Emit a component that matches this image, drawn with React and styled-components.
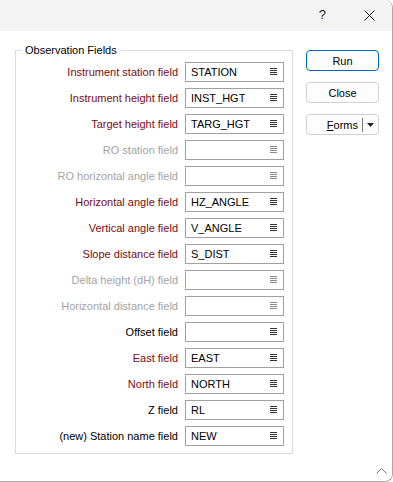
import React from 'react'
import styled, { createGlobalStyle } from 'styled-components'

const GlobalStyle = createGlobalStyle`
	html, body {
		margin: 0;
		padding: 0;
		background: #ffffff;
	}
	body {
		font-family: "Liberation Sans", Arial, sans-serif;
		font-size: 11px;
	}
`

const maroon = '#7a0a14'
const disabledGrey = '#a3a3a3'

const fields = [
	{ label: 'Instrument station field', value: 'STATION', tone: 'required' },
	{ label: 'Instrument height field', value: 'INST_HGT', tone: 'required' },
	{ label: 'Target height field', value: 'TARG_HGT', tone: 'required' },
	{ label: 'RO station field', value: '', tone: 'disabled' },
	{ label: 'RO horizontal angle field', value: '', tone: 'disabled' },
	{ label: 'Horizontal angle field', value: 'HZ_ANGLE', tone: 'required' },
	{ label: 'Vertical angle field', value: 'V_ANGLE', tone: 'required' },
	{ label: 'Slope distance field', value: 'S_DIST', tone: 'required' },
	{ label: 'Delta height (dH) field', value: '', tone: 'disabled' },
	{ label: 'Horizontal distance field', value: '', tone: 'disabled' },
	{ label: 'Offset field', value: '', tone: 'normal' },
	{ label: 'East field', value: 'EAST', tone: 'required' },
	{ label: 'North field', value: 'NORTH', tone: 'required' },
	{ label: 'Z field', value: 'RL', tone: 'normal' },
	{ label: '(new) Station name field', value: 'NEW', tone: 'normal' },
]

const Window = styled.div`
	width: 392px;
	height: 481px;
	border-right: 1px solid #a9a9a9;
	border-bottom: 1px solid #a9a9a9;
	border-top-right-radius: 8px;
	border-bottom-right-radius: 8px;
	overflow: hidden;
	display: flex;
	flex-direction: column;
	position: relative;
	background: #ffffff;
`

const TitleBar = styled.div`
	height: 31px;
	flex: none;
	background: #f3f3f3;
	display: flex;
	align-items: center;
	justify-content: flex-end;
	padding-right: 17px;
	gap: 38px;
`

const HelpMark = styled.span`
	font-family: "Liberation Sans", Arial, sans-serif;
	font-size: 13px;
	color: #1a1a1a;
	margin-top: -3px;
`

const Body = styled.div`
	flex: 1;
	display: flex;
	align-items: flex-start;
	padding: 12px 0 0 15px;
	gap: 13px;
`

const GroupBox = styled.fieldset`
	margin: 0;
	width: 278px;
	height: 411px;
	box-sizing: border-box;
	border: 1px solid #dcdcdc;
	padding: 5px 8px 0 0;
	display: grid;
	grid-template-columns: 1fr 99px;
	column-gap: 7px;
	row-gap: 6px;
	align-content: start;
`

const Legend = styled.legend`
	margin-left: 6px;
	padding: 0 3px;
	line-height: 14px;
	color: #000000;
	font-size: 11px;
`

const FieldLabel = styled.label`
	justify-self: end;
	align-self: center;
	white-space: nowrap;
	color: ${p => p.$tone === 'required' ? maroon : p.$tone === 'disabled' ? disabledGrey : '#000000'};
`

const FieldBox = styled.div`
	height: 20px;
	box-sizing: border-box;
	border: 1px solid #a0a0a0;
	display: flex;
	align-items: center;
	justify-content: space-between;
	padding: 0 6px 0 5px;
	color: #000000;
	background: #ffffff;
`

const Buttons = styled.div`
	display: flex;
	flex-direction: column;
	gap: 11px;
	padding-top: 7px;
`

const Button = styled.button`
	width: 73px;
	height: 21px;
	box-sizing: border-box;
	border: 1px solid ${p => p.$primary ? '#0067c0' : '#d0d0d0'};
	border-radius: 4px;
	background: #fdfdfd;
	font-family: "Liberation Sans", Arial, sans-serif;
	font-size: 11px;
	color: #000000;
	padding: 0;
	display: flex;
	align-items: center;
	justify-content: center;
`

const SplitButton = styled(Button)`
	justify-content: flex-end;
	padding-right: 4px;
	gap: 4px;
`

const SplitDivider = styled.span`
	width: 1px;
	height: 14px;
	background: #7a7a7a;
`

const Underlined = styled.span`
	text-decoration: underline;
`

const Grip = styled.div`
	position: absolute;
	right: 5px;
	bottom: 7px;
	line-height: 0;
`

const ListIcon = ({ color }) => (
	<svg width="7" height="8" viewBox="0 0 7 8">
		<g stroke={color} strokeWidth="1">
			<line x1="0" y1="0.5" x2="7" y2="0.5" />
			<line x1="0" y1="2.5" x2="7" y2="2.5" />
			<line x1="0" y1="4.5" x2="7" y2="4.5" />
			<line x1="0" y1="6.5" x2="7" y2="6.5" />
		</g>
	</svg>
)

const CloseIcon = () => (
	<svg width="11" height="11" viewBox="0 0 11 11">
		<path d="M0.5 0.5 L10.5 10.5 M10.5 0.5 L0.5 10.5" stroke="#1a1a1a" strokeWidth="1" fill="none" />
	</svg>
)

const App = () => {
	return (
		<>
			<GlobalStyle />
			<Window>
				<TitleBar>
					<HelpMark>?</HelpMark>
					<CloseIcon />
				</TitleBar>
				<Body>
					<GroupBox>
						<Legend>Observation Fields</Legend>
						{fields.map((f, i) => (
							<React.Fragment key={i}>
								<FieldLabel $tone={f.tone}>{f.label}</FieldLabel>
								<FieldBox>
									<span>{f.value}</span>
									<ListIcon color={f.tone === 'disabled' ? '#8a8a8a' : '#333333'} />
								</FieldBox>
							</React.Fragment>
						))}
					</GroupBox>
					<Buttons>
						<Button $primary>Run</Button>
						<Button>Close</Button>
						<SplitButton>
							<span><Underlined>F</Underlined>orms</span>
							<SplitDivider />
							<svg width="7" height="4" viewBox="0 0 7 4">
								<path d="M0 0 L7 0 L3.5 4 Z" fill="#202020" />
							</svg>
						</SplitButton>
					</Buttons>
				</Body>
				<Grip>
					<svg width="11" height="6" viewBox="0 0 11 6">
						<path d="M0.5 5.5 L5.5 0.5 L10.5 5.5" stroke="#707070" strokeWidth="1" fill="none" />
					</svg>
				</Grip>
			</Window>
		</>
	)
}

export default App
